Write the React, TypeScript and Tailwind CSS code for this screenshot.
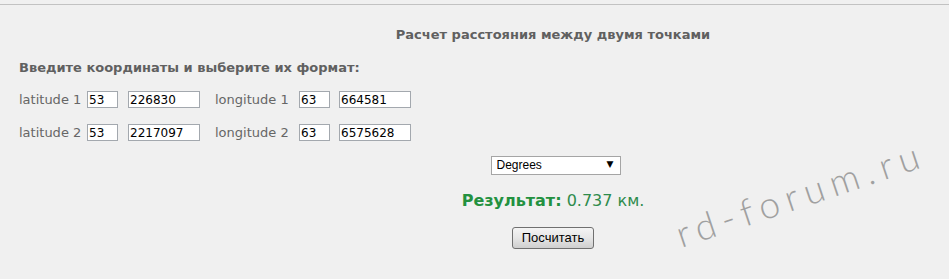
import React from "react";

const inputCls =
  "h-[17px] border border-[#a3a8ae] bg-white px-[1px] text-[12px] leading-[15px] text-black font-['DejaVu_Sans',sans-serif] outline-none";

function Row({ n, a, b, c, d }: { n: string; a: string; b: string; c: string; d: string }) {
  return (
    <div className="flex items-center h-[17px] pl-[19px]">
      <span className="w-[68px] shrink-0 leading-[17px]">latitude {n}</span>
      <input className={`${inputCls} w-[31px]`} defaultValue={a} />
      <input className={`${inputCls} w-[72px] ml-[10px]`} defaultValue={b} />
      <span className="w-[84px] shrink-0 ml-[15px] leading-[17px]">longitude {n}</span>
      <input className={`${inputCls} w-[31px]`} defaultValue={c} />
      <input className={`${inputCls} w-[72px] ml-[9px]`} defaultValue={d} />
    </div>
  );
}

export default function App() {
  return (
    <div className="relative w-[949px] h-[279px] overflow-hidden bg-[#f0f0f0] text-[#666666] text-[13px] font-['DejaVu_Sans',sans-serif]">
      <div className="h-[4px]" />
      <div className="h-px bg-[#c2c2c2]" />
      <div className="w-[1106px]">
        <div className="mt-[22px] text-center font-bold leading-[16px] text-[#606060]">
          Расчет расстояния между двумя точками
        </div>
        <div className="mt-[17px] pl-[19px] font-bold leading-[16px] text-[#606060]">
          Введите координаты и выберите их формат:
        </div>
        <div className="mt-[15px]">
          <Row n="1" a="53" b="226830" c="63" d="664581" />
        </div>
        <div className="mt-[16px]">
          <Row n="2" a="53" b="2217097" c="63" d="6575628" />
        </div>
        <div className="mt-[14px] flex justify-center">
          <div className="relative ml-[5px] w-[130px] h-[19px]">
            <select className="appearance-none w-full h-full border border-[#a5a5a5] bg-white pl-[5px] text-[12px] leading-[17px] text-black font-['Liberation_Sans',sans-serif] outline-none">
              <option>Degrees</option>
            </select>
            <span className="pointer-events-none absolute right-[7px] top-[3px] text-[9px] leading-[12px] text-black">▼</span>
          </div>
        </div>
        <div className="mt-[17px] text-center text-[16px] leading-[20px] text-[#2e8b4c]">
          <span className="font-bold text-[#23913f]">Результат:</span> 0.737 км.
        </div>
        <div className="mt-[16px] flex justify-center">
          <button className="w-[82px] h-[22px] rounded-[3px] border border-[#707070] bg-gradient-to-b from-[#f4f4f4] via-[#e6e6e6] to-[#cfcfcf] text-[13px] leading-[20px] text-black font-['Liberation_Sans',sans-serif]">
            Посчитать
          </button>
        </div>
      </div>
      <div className="absolute left-[682px] top-[218px] origin-[0_100%] -rotate-[18.5deg] whitespace-nowrap font-['Lato',sans-serif] font-light text-[37px] leading-[32px] tracking-[7px] text-[#a0a0a0]">
        rd-forum.ru
      </div>
    </div>
  );
}
